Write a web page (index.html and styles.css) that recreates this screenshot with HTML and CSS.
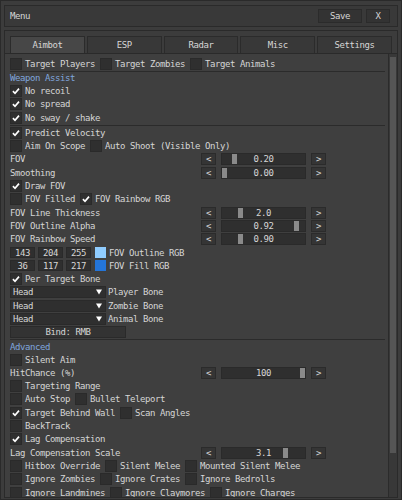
FILE: index.html
```html
<!DOCTYPE html>
<html>
<head>
  <meta charset="UTF-8">
  <meta name="viewport" content="width=device-width, initial-scale=1.0">
  <title>Menu</title>
  <link rel="stylesheet" href="styles.css">
</head>
<body>
  <div class="window">
    <div class="titlebar">
      <span class="title">Menu</span>
      <span class="tbtn save">Save</span>
      <span class="tbtn close">X</span>
    </div>

    <div class="panel">
      <div class="tabs">
        <span class="tab active">Aimbot</span>
        <span class="tab">ESP</span>
        <span class="tab">Radar</span>
        <span class="tab">Misc</span>
        <span class="tab">Settings</span>
      </div>

      <div class="content">
        <div class="list">
          <div class="row">
            <span class="cb"><span class="box"></span>Target Players</span>
            <span class="cb"><span class="box"></span>Target Zombies</span>
            <span class="cb"><span class="box"></span>Target Animals</span>
          </div>
          <div class="sep"></div>
          <div class="header">Weapon Assist</div>
          <div class="row"><span class="cb"><span class="box on"><svg viewBox="0 0 12 12"><path d="M2.3 6.2 L4.8 8.8 L9.6 3.2"/></svg></span>No recoil</span></div>
          <div class="row"><span class="cb"><span class="box on"><svg viewBox="0 0 12 12"><path d="M2.3 6.2 L4.8 8.8 L9.6 3.2"/></svg></span>No spread</span></div>
          <div class="row"><span class="cb"><span class="box on"><svg viewBox="0 0 12 12"><path d="M2.3 6.2 L4.8 8.8 L9.6 3.2"/></svg></span>No sway / shake</span></div>
          <div class="sep"></div>
          <div class="row"><span class="cb"><span class="box on"><svg viewBox="0 0 12 12"><path d="M2.3 6.2 L4.8 8.8 L9.6 3.2"/></svg></span>Predict Velocity</span></div>
          <div class="row">
            <span class="cb"><span class="box"></span>Aim On Scope</span>
            <span class="cb"><span class="box"></span>Auto Shoot (Visible Only)</span>
          </div>
          <div class="row srow">
            <span class="slabel">FOV</span>
            <span class="arrow">&lt;</span>
            <span class="track"><span class="grab" style="left:10px"></span><span class="val">0.20</span></span>
            <span class="arrow">&gt;</span>
          </div>
          <div class="row srow">
            <span class="slabel">Smoothing</span>
            <span class="arrow">&lt;</span>
            <span class="track"><span class="grab" style="left:0px"></span><span class="val">0.00</span></span>
            <span class="arrow">&gt;</span>
          </div>
          <div class="row"><span class="cb"><span class="box on"><svg viewBox="0 0 12 12"><path d="M2.3 6.2 L4.8 8.8 L9.6 3.2"/></svg></span>Draw FOV</span></div>
          <div class="row">
            <span class="cb"><span class="box"></span>FOV Filled</span>
            <span class="cb"><span class="box on"><svg viewBox="0 0 12 12"><path d="M2.3 6.2 L4.8 8.8 L9.6 3.2"/></svg></span>FOV Rainbow RGB</span>
          </div>
          <div class="row srow">
            <span class="slabel">FOV Line Thickness</span>
            <span class="arrow">&lt;</span>
            <span class="track"><span class="grab" style="left:16px"></span><span class="val">2.0</span></span>
            <span class="arrow">&gt;</span>
          </div>
          <div class="row srow">
            <span class="slabel">FOV Outline Alpha</span>
            <span class="arrow">&lt;</span>
            <span class="track"><span class="grab" style="left:72px"></span><span class="val">0.92</span></span>
            <span class="arrow">&gt;</span>
          </div>
          <div class="row srow">
            <span class="slabel">FOV Rainbow Speed</span>
            <span class="arrow">&lt;</span>
            <span class="track"><span class="grab" style="left:16px"></span><span class="val">0.90</span></span>
            <span class="arrow">&gt;</span>
          </div>
          <div class="row rgb">
            <span class="num">143</span><span class="num">204</span><span class="num">255</span>
            <span class="swatch" style="background:rgb(143,204,255)"></span>
            <span>FOV Outline RGB</span>
          </div>
          <div class="row rgb">
            <span class="num">36</span><span class="num">117</span><span class="num">217</span>
            <span class="swatch" style="background:rgb(36,117,217)"></span>
            <span>FOV Fill RGB</span>
          </div>
          <div class="row"><span class="cb"><span class="box on"><svg viewBox="0 0 12 12"><path d="M2.3 6.2 L4.8 8.8 L9.6 3.2"/></svg></span>Per Target Bone</span></div>
          <div class="row crow">
            <span class="combo">Head<svg class="down" viewBox="0 0 6 6"><polygon points="0,0.5 6,0.5 3,5.5"/></svg></span>
            <span>Player Bone</span>
          </div>
          <div class="row crow">
            <span class="combo">Head<svg class="down" viewBox="0 0 6 6"><polygon points="0,0.5 6,0.5 3,5.5"/></svg></span>
            <span>Zombie Bone</span>
          </div>
          <div class="row crow">
            <span class="combo">Head<svg class="down" viewBox="0 0 6 6"><polygon points="0,0.5 6,0.5 3,5.5"/></svg></span>
            <span>Animal Bone</span>
          </div>
          <div class="row"><span class="bind">Bind: RMB</span></div>
          <div class="sep"></div>
          <div class="header">Advanced</div>
          <div class="row"><span class="cb"><span class="box"></span>Silent Aim</span></div>
          <div class="row srow">
            <span class="slabel">HitChance (%)</span>
            <span class="arrow">&lt;</span>
            <span class="track"><span class="grab" style="left:78px"></span><span class="val">100</span></span>
            <span class="arrow">&gt;</span>
          </div>
          <div class="row"><span class="cb"><span class="box"></span>Targeting Range</span></div>
          <div class="row">
            <span class="cb"><span class="box"></span>Auto Stop</span>
            <span class="cb"><span class="box"></span>Bullet Teleport</span>
          </div>
          <div class="row">
            <span class="cb"><span class="box on"><svg viewBox="0 0 12 12"><path d="M2.3 6.2 L4.8 8.8 L9.6 3.2"/></svg></span>Target Behind Wall</span>
            <span class="cb"><span class="box"></span>Scan Angles</span>
          </div>
          <div class="row"><span class="cb"><span class="box"></span>BackTrack</span></div>
          <div class="row"><span class="cb"><span class="box on"><svg viewBox="0 0 12 12"><path d="M2.3 6.2 L4.8 8.8 L9.6 3.2"/></svg></span>Lag Compensation</span></div>
          <div class="row srow">
            <span class="slabel">Lag Compensation Scale</span>
            <span class="arrow">&lt;</span>
            <span class="track"><span class="grab" style="left:61px"></span><span class="val">3.1</span></span>
            <span class="arrow">&gt;</span>
          </div>
          <div class="row">
            <span class="cb"><span class="box"></span>Hitbox Override</span>
            <span class="cb"><span class="box"></span>Silent Melee</span>
            <span class="cb"><span class="box"></span>Mounted Silent Melee</span>
          </div>
          <div class="row">
            <span class="cb"><span class="box"></span>Ignore Zombies</span>
            <span class="cb"><span class="box"></span>Ignore Crates</span>
            <span class="cb"><span class="box"></span>Ignore Bedrolls</span>
          </div>
          <div class="row">
            <span class="cb"><span class="box"></span>Ignore Landmines</span>
            <span class="cb"><span class="box"></span>Ignore Claymores</span>
            <span class="cb"><span class="box"></span>Ignore Charges</span>
          </div>
        </div>
        <div class="scrollbar"><div class="thumb"></div></div>
      </div>
    </div>
  </div>
</body>
</html>
```

FILE: styles.css
```css
body {
  margin: 0;
  background: #3c3c3c;
  font-family: "DejaVu Sans Mono", monospace;
  font-size: 9px;
  letter-spacing: -0.42px;
  color: #d6d6d6;
}

.window {
  height: 500px;
  box-sizing: border-box;
  border: 1px solid #2a2a2a;
  padding: 4px 3px 1px 3px;
  display: flex;
  flex-direction: column;
  gap: 3px;
}

.titlebar {
  height: 22px;
  box-sizing: border-box;
  border: 1px solid #2a2a2a;
  background: #393939;
  display: flex;
  align-items: center;
  gap: 4px;
  padding: 0 7px 0 5px;
}

.title {
  flex: 1;
}

.tbtn {
  height: 14px;
  box-sizing: border-box;
  border: 1px solid #2b2b2b;
  background: #333333;
  display: flex;
  align-items: center;
  justify-content: center;
}

.save {
  width: 44px;
}

.close {
  width: 24px;
}

.panel {
  flex: 1;
  min-height: 0;
  border: 1px solid #2a2a2a;
  padding-top: 5px;
  display: flex;
  flex-direction: column;
}

.tabs {
  display: flex;
  gap: 2px;
  height: 17px;
  margin: 0 5px;
}

.tab {
  flex: 1;
  box-sizing: border-box;
  border: 1px solid #2b2b2b;
  border-bottom: none;
  background: #383838;
  display: flex;
  align-items: center;
  justify-content: center;
}

.tab.active {
  background: #474747;
}

.content {
  flex: 1;
  min-height: 0;
  display: flex;
  border-top: 1px solid #2a2a2a;
  background: #3f3f3f;
}

.list {
  flex: 1;
  overflow: hidden;
  padding: 3px 3px 0 5px;
}

.row {
  height: 13.3px;
  display: flex;
  align-items: center;
  gap: 5px;
  white-space: nowrap;
}

.cb {
  display: flex;
  align-items: center;
  gap: 3px;
}

.box {
  width: 12px;
  height: 12px;
  box-sizing: border-box;
  border: 1px solid #2a2a2a;
  background: #2f2f2f;
  display: flex;
}

.box svg {
  width: 10px;
  height: 10px;
}

.box svg path {
  fill: none;
  stroke: #ffffff;
  stroke-width: 2;
}

.sep {
  height: 1px;
  margin: 0.5px 0;
  background: #2b2b2b;
}

.header {
  height: 12px;
  display: flex;
  align-items: center;
  color: #7fa6de;
}

.slabel {
  width: 186px;
}

.arrow {
  width: 15px;
  height: 12px;
  box-sizing: border-box;
  border: 1px solid #2b2b2b;
  background: #353535;
  display: flex;
  align-items: center;
  justify-content: center;
}

.track {
  position: relative;
  width: 85px;
  height: 12px;
  box-sizing: border-box;
  border: 1px solid #2a2a2a;
  background: #2f2f2f;
  display: flex;
  align-items: center;
  justify-content: center;
}

.grab {
  position: absolute;
  top: 0;
  width: 5px;
  height: 10px;
  background: #8a8a8a;
}

.val {
  position: relative;
}

.rgb {
  gap: 3px;
}

.num {
  width: 25px;
  height: 11px;
  box-sizing: border-box;
  background: #2f2f2f;
  border: 1px solid #2a2a2a;
  display: flex;
  align-items: center;
  justify-content: center;
}

.swatch {
  width: 11px;
  height: 11px;
  margin-left: 1px;
}

.crow {
  gap: 2px;
}

.combo {
  width: 96px;
  height: 12px;
  box-sizing: border-box;
  border: 1px solid #2a2a2a;
  background: #2f2f2f;
  padding: 0 3px 0 2px;
  display: flex;
  align-items: center;
  justify-content: space-between;
}

.down {
  width: 6px;
  height: 6px;
  fill: #ffffff;
}

.bind {
  width: 116px;
  height: 12px;
  box-sizing: border-box;
  border: 1px solid #2a2a2a;
  background: #333333;
  display: flex;
  align-items: center;
  justify-content: center;
}

.scrollbar {
  width: 9px;
  box-sizing: border-box;
  border-left: 1px solid #2b2b2b;
  background: #383838;
  padding: 3px 1px;
}

.thumb {
  height: 396px;
  background: #555555;
}
```
